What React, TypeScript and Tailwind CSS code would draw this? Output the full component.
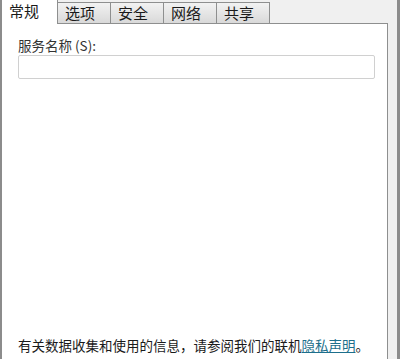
const tabs = ['选项', '安全', '网络', '共享'];

export default function App() {
  return (
    <div
      className="w-[400px] h-[359px] bg-[#f0f0f0] border-l-2 border-r-[3px] border-[#8c8c8c] pr-[9px] flex flex-col text-[13.5px] text-[#1a1a1a]"
      style={{ fontFamily: '"Noto Sans CJK SC", "Liberation Sans", sans-serif' }}
    >
      <div className="h-[23px] flex items-end shrink-0">
        <div className="relative z-10 w-[56px] h-[24px] -mb-px bg-white border-r border-[#8e8f8f] pl-[7px] pt-[1px] leading-[20px] text-[15px]">
          常规
        </div>
        {tabs.map((t) => (
          <div
            key={t}
            className="w-[53px] h-[21px] border border-l-0 border-b-0 border-[#8e8f8f] bg-gradient-to-b from-[#f2f2f2] to-[#d9d9d9] pl-[7px] leading-[20px] text-[15px]"
          >
            {t}
          </div>
        ))}
      </div>
      <div className="flex-1 bg-white border-t border-r border-[#8e8f8f] pl-[16px] pr-[12px] pt-[12px] pb-[5px] flex flex-col">
        <div className="leading-[18px] text-[#333]">服务名称 (S):</div>
        <div className="mt-[1px] h-[24px] border border-[#d0d0d0] rounded-[2px] bg-white" />
        <div className="mt-auto leading-[18px] whitespace-nowrap">
          有关数据收集和使用的信息，请参阅我们的联机
          <span className="text-[#1d6f8c] underline">隐私声明</span>。
        </div>
      </div>
    </div>
  );
}
